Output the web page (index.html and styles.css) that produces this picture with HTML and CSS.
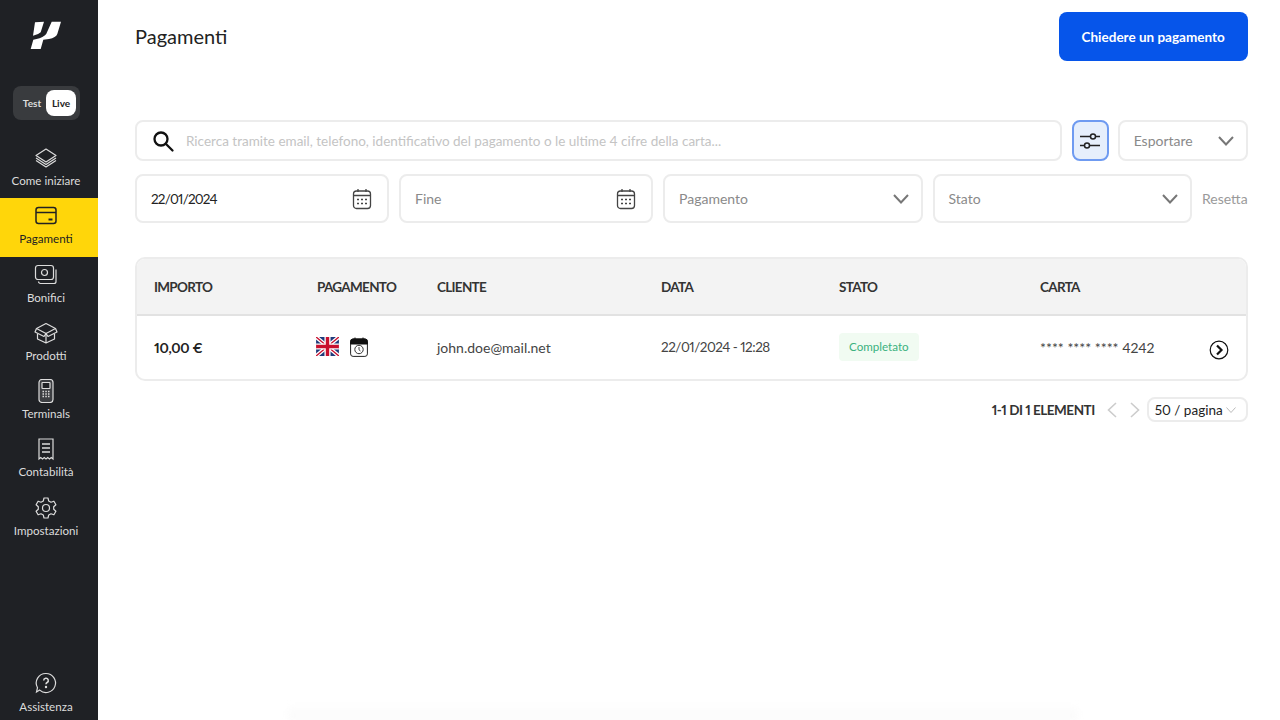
FILE: index.html
```html
<!DOCTYPE html>
<html lang="it">
<head>
  <meta charset="UTF-8">
  <meta name="viewport" content="width=device-width, initial-scale=1.0">
  <title>Pagamenti</title>
  <link rel="stylesheet" href="styles.css">
</head>
<body>
  <aside class="sidebar">
    <div class="logo">
      <svg width="32" height="30" viewBox="0 0 32 30"><path fill="#fff" d="M5 1.300 14 .7l-3.300 10.600Q8 14 3 14.700zM21.700.7H31L27.300 13Q26 16.500 19 18l-5.700.7L10.700 28H.7l2.600-9.300Q10 18 15 14.300q1.700-1.300 2-3z"/></svg>
    </div>
    <div class="mode-toggle">
      <span class="mode">Test</span>
      <span class="mode mode-on">Live</span>
    </div>
    <nav class="nav">
      <a class="nav-item">
        <svg width="24" height="24" viewBox="0 0 24 24" fill="none" stroke="currentColor" stroke-width="1.200" stroke-linejoin="round"><path d="M12 3 22 9.500 12 16 2 9.500z"/><path d="M2 12l10 6.500L22 12M2 14.500 12 21l10-6.500"/></svg>
        <span>Come iniziare</span>
      </a>
      <a class="nav-item active">
        <svg width="24" height="24" viewBox="0 0 24 24" fill="none" stroke="currentColor" stroke-width="1.500"><rect x="2" y="3.500" width="20" height="16" rx="2.500"/><path d="M2 8.500h20"/><path d="M14.500 15.500h4" stroke-width="2"/></svg>
        <span>Pagamenti</span>
      </a>
      <a class="nav-item">
        <svg width="24" height="24" viewBox="0 0 24 24" fill="none" stroke="currentColor" stroke-width="1.200"><rect x="1.500" y="2.500" width="18" height="14" rx="2.500"/><circle cx="10.500" cy="9.500" r="3"/><path d="M22 6.500v12a2 2 0 0 1-2 2H6.500a2 2 0 0 1-2-2"/></svg>
        <span>Bonifici</span>
      </a>
      <a class="nav-item">
        <svg width="24" height="24" viewBox="0 0 24 24" fill="none" stroke="currentColor" stroke-width="1.200" stroke-linejoin="round"><path d="M12 2.500 21.500 7.500 12 12.500 2.500 7.500z"/><path d="M2.500 7.500 1 11l9 4.500 2-3 2 3 9-4.500-1.500-3.500"/><path d="M3.500 13v5l8.500 4 8.500-4v-5M12 12.500V22"/></svg>
        <span>Prodotti</span>
      </a>
      <a class="nav-item">
        <svg width="24" height="24" viewBox="0 0 24 24" fill="none" stroke="currentColor" stroke-width="1.200"><rect x="5" y="0.500" width="14" height="23" rx="3" fill="#3c3e42"/><rect x="8" y="3.500" width="8" height="6" rx="0.500" fill="#1f2125"/><path d="M8.500 12.500h1.500M11.300 12.500h1.500M14 12.500h1.500M8.500 15h1.500M11.300 15h1.500M14 15h1.500M8.500 17.500h1.500M11.300 17.500h1.500M14 17.500h1.500" stroke-width="1.400"/></svg>
        <span>Terminals</span>
      </a>
      <a class="nav-item">
        <svg width="24" height="24" viewBox="0 0 24 24" fill="none" stroke="currentColor" stroke-width="1.200"><path d="M5 22V2h14v20l-1.750-1.500L15.500 22l-1.750-1.500L12 22l-1.750-1.500L8.500 22l-1.750-1.500z"/><path d="M8 7h8M8 11h8M8 15h8" stroke-width="1.500"/></svg>
        <span>Contabilità</span>
      </a>
      <a class="nav-item">
        <svg width="24" height="24" viewBox="0 0 24 24" fill="none" stroke="currentColor" stroke-width="1.200" stroke-linejoin="round"><circle cx="12" cy="12" r="3.500"/><path d="M10 2h4l.7 3 2.300 1.200 2.900-1 2 3.500-2.200 2.100v2.400l2.200 2.100-2 3.500-2.900-1-2.300 1.200-.7 3h-4l-.7-3L7 17.800l-2.900 1-2-3.500 2.200-2.100v-2.400L2.100 8.700l2-3.500 2.900 1 2.300-1.200z"/></svg>
        <span>Impostazioni</span>
      </a>
    </nav>
    <a class="nav-item help">
      <svg width="24" height="24" viewBox="0 0 24 24" fill="none" stroke="currentColor" stroke-width="1.200"><path d="M12 2.500a9.500 9.500 0 1 1-6.300 16.600L2.500 21l1-4.300A9.500 9.500 0 0 1 12 2.500z"/><path d="M9.700 9.500a2.300 2.300 0 1 1 3.400 2c-.8.500-1.100.9-1.100 1.800" stroke-width="1.500"/><circle cx="12" cy="16" r=".6" fill="currentColor"/></svg>
      <span>Assistenza</span>
    </a>
  </aside>

  <main class="content">
    <header class="top">
      <h1>Pagamenti</h1>
      <button class="btn-primary">Chiedere un pagamento</button>
    </header>

    <div class="filters">
      <div class="search-row">
        <div class="field search">
          <svg width="24" height="24" viewBox="0 0 24 24" fill="none" stroke="#111" stroke-width="2.300" stroke-linecap="round"><circle cx="10" cy="10" r="6.500"/><path d="M15 15l6.500 6.500"/></svg>
          <span class="placeholder light">Ricerca tramite email, telefono, identificativo del pagamento o le ultime 4 cifre della carta...</span>
        </div>
        <button class="filter-btn">
          <svg width="24" height="24" viewBox="0 0 24 24" fill="none" stroke="#222" stroke-width="1.500"><path d="M2 7.500h10.500M18 7.500h4M2 16.500h4M11.500 16.500H22"/><circle cx="15" cy="7.500" r="2.500"/><circle cx="9" cy="16.500" r="2.500"/></svg>
        </button>
        <div class="field export">
          <span class="placeholder">Esportare</span>
          <svg class="chev" width="16" height="10" viewBox="0 0 16 10" fill="none" stroke="#777" stroke-width="2"><path d="M1 1l7 7.500L15 1"/></svg>
        </div>
      </div>
      <div class="filter-row">
        <div class="field date">
          <span class="date-val">22/01/2024</span>
          <svg width="20" height="22" viewBox="0 0 20 22" fill="none" stroke="#444" stroke-width="1.300"><rect x="1.500" y="3" width="17" height="17.500" rx="3"/><path d="M1.500 7.500h17M6 1v3M14 1v3"/><path d="M5 11.500h2M9 11.500h2M13 11.500h2M5 15.500h2M9 15.500h2M13 15.500h2" stroke-width="1.700"/></svg>
        </div>
        <div class="field date">
          <span class="placeholder">Fine</span>
          <svg width="20" height="22" viewBox="0 0 20 22" fill="none" stroke="#444" stroke-width="1.300"><rect x="1.500" y="3" width="17" height="17.500" rx="3"/><path d="M1.500 7.500h17M6 1v3M14 1v3"/><path d="M5 11.500h2M9 11.500h2M13 11.500h2M5 15.500h2M9 15.500h2M13 15.500h2" stroke-width="1.700"/></svg>
        </div>
        <div class="field select">
          <span class="placeholder">Pagamento</span>
          <svg class="chev" width="16" height="10" viewBox="0 0 16 10" fill="none" stroke="#777" stroke-width="2"><path d="M1 1l7 7.500L15 1"/></svg>
        </div>
        <div class="field select">
          <span class="placeholder">Stato</span>
          <svg class="chev" width="16" height="10" viewBox="0 0 16 10" fill="none" stroke="#777" stroke-width="2"><path d="M1 1l7 7.500L15 1"/></svg>
        </div>
        <span class="reset">Resetta</span>
      </div>
    </div>

    <section class="table">
      <div class="t-row t-head">
        <span>IMPORTO</span>
        <span>PAGAMENTO</span>
        <span>CLIENTE</span>
        <span>DATA</span>
        <span>STATO</span>
        <span>CARTA</span>
      </div>
      <div class="t-row t-body">
        <span class="amount">10,00 €</span>
        <span class="pay-icons">
          <svg width="23" height="19" viewBox="0 0 60 50"><rect width="60" height="50" fill="#1f3a7a"/><path d="M0 0l60 50M60 0L0 50" stroke="#fff" stroke-width="10"/><path d="M0 0l60 50M60 0L0 50" stroke="#c8102e" stroke-width="3.500"/><path d="M30 0v50M0 25h60" stroke="#fff" stroke-width="16"/><path d="M30 0v50M0 25h60" stroke="#c8102e" stroke-width="9"/></svg>
          <svg width="18" height="20" viewBox="0 0 18 20"><rect x="0.600" y="2" width="16.800" height="17.400" rx="2.500" fill="#fff" stroke="#222"/><path d="M0.600 7V4.500A2.500 2.500 0 0 1 3 2h12a2.500 2.500 0 0 1 2.400 2.500V7z" fill="#111" stroke="#111"/><path d="M5 0.500v3M13 0.500v3" stroke="#111"/><circle cx="9" cy="12.500" r="4.200" fill="none" stroke="#333"/><path d="M9 10v2.800l1.500 1.200" fill="none" stroke="#333" stroke-width=".9"/></svg>
        </span>
        <span class="cell">john.doe@mail.net</span>
        <span class="cell row-date">22/01/2024 - 12:28</span>
        <span><span class="badge">Completato</span></span>
        <span class="card-cell">
          <span class="cell">**** **** **** 4242</span>
          <svg class="row-open" width="20" height="20" viewBox="0 0 20 20" fill="none" stroke="#111"><circle cx="10" cy="10" r="8.800" stroke-width="1.200"/><path d="M8 5.500l4.500 4.500L8 14.500" stroke-width="2.200"/></svg>
        </span>
      </div>
    </section>

    <div class="pager">
      <span class="pager-count">1-1 DI 1 ELEMENTI</span>
      <svg width="12" height="16" viewBox="0 0 12 16" fill="none" stroke="#ccc" stroke-width="1.600"><path d="M10 1L2.500 8l7.500 7"/></svg>
      <svg width="12" height="16" viewBox="0 0 12 16" fill="none" stroke="#ccc" stroke-width="1.600"><path d="M2 1l7.500 7L2 15"/></svg>
      <div class="page-size">
        <span>50 / pagina</span>
        <svg width="10" height="6" viewBox="0 0 10 6" fill="none" stroke="#bbb"><path d="M.5.500 5 5.500l4.500-5"/></svg>
      </div>
    </div>

    <div class="bottom-fade"></div>
  </main>
</body>
</html>
```

FILE: styles.css
```css
* {
  box-sizing: border-box;
}

body {
  margin: 0;
  height: 720px;
  overflow: hidden;
  display: flex;
  background-color: #fff;
  color: #222;
  font-family: Lato, "Open Sans", sans-serif;
  font-size: 14px;
  font-variant-numeric: proportional-nums;
}

.sidebar {
  width: 98px;
  flex-shrink: 0;
  height: 100%;
  display: flex;
  flex-direction: column;
  background-color: #1f2125;
  color: #dcdcdc;
}

.logo {
  height: 86px;
  padding: 21px 6px 0 0;
  display: flex;
  justify-content: center;
  align-items: flex-start;
}

.mode-toggle {
  width: 67px;
  height: 34px;
  margin-left: 13px;
  padding: 4px 4px 4px 5px;
  display: flex;
  align-items: center;
  background-color: #393b3e;
  border-radius: 8px;
}

.mode {
  flex: 1;
  text-align: center;
  font-size: 10px;
  font-weight: 700;
  color: #ddd;
}

.mode-on {
  flex: 0 0 30px;
  height: 26px;
  line-height: 26px;
  background-color: #fff;
  border-radius: 8px;
  color: #222;
}

.nav {
  margin-top: 20px;
  flex: 1;
}

.nav-item {
  height: 58.25px;
  padding: 6px 6px 0 0;
  display: flex;
  flex-direction: column;
  align-items: center;
  gap: 3px;
  font-size: 11.600px;
  line-height: 15px;
}

.nav-item.active {
  background-color: #ffd60a;
  color: #222;
}

.help {
  height: 59px;
  padding-top: 10px;
  gap: 3.500px;
}

.content {
  position: relative;
  flex: 1;
  padding: 12px 33px 0 37px;
}

.top {
  height: 49px;
  display: flex;
  justify-content: space-between;
  align-items: center;
}

h1 {
  margin: 0 0 2px;
  font-size: 20px;
  font-weight: 400;
  color: #222;
}

.btn-primary {
  width: 189px;
  height: 49px;
  border: none;
  border-radius: 8px;
  background-color: #0655ea;
  color: #fff;
  font-family: inherit;
  font-size: 13.500px;
  font-weight: 700;
}

.filters {
  margin-top: 59px;
}

.search-row {
  display: flex;
  gap: 10px;
  height: 41px;
}

.field {
  display: flex;
  align-items: center;
  justify-content: space-between;
  border: 2px solid #ececec;
  border-radius: 8px;
  padding: 0 12px 0 14px;
  background-color: #fff;
}

.search {
  flex: 1;
  justify-content: flex-start;
  gap: 11px;
  padding-left: 14px;
}

.placeholder {
  color: #8a8a8a;
}

.light {
  font-size: 13.500px;
  color: #c4c4c4;
}

.date-val {
  font-size: 13.500px;
  letter-spacing: -.8px;
}

.filter-btn {
  width: 37px;
  padding: 0;
  display: flex;
  align-items: center;
  justify-content: center;
  background-color: #e6effc;
  border: 2px solid #6f9bf1;
  border-radius: 8px;
}

.export {
  width: 130px;
  margin-left: -1px;
}

.filter-row {
  display: flex;
  align-items: stretch;
  gap: 10px;
  height: 49px;
  margin-top: 13px;
}

.date {
  width: 254px;
  padding-right: 15px;
}

.select {
  width: 259.500px;
}

.reset {
  align-self: center;
  color: #9a9a9a;
}

.table {
  margin-top: 34px;
  border: 2px solid #ececec;
  border-radius: 10px;
  overflow: hidden;
}

.t-row {
  display: grid;
  grid-template-columns: 163px 120px 224px 178px 201px 1fr;
  align-items: center;
  padding-left: 17px;
}

.t-head {
  height: 57px;
  background-color: #f3f3f3;
  border-bottom: 2px solid #e2e2e2;
  font-size: 13.500px;
  letter-spacing: -.7px;
  font-weight: 700;
  color: #333;
}

.t-body {
  height: 63px;
  padding-bottom: 1px;
}

.amount {
  font-weight: 700;
  letter-spacing: -.3px;
}

.pay-icons {
  display: flex;
  align-items: center;
  gap: 11px;
  margin: 0 0 1px -1px;
}

.cell {
  color: #444;
}

.row-date {
  font-size: 13.500px;
  letter-spacing: -.5px;
}

.badge {
  display: inline-block;
  padding: 6px 10px;
  background-color: #f1fbf2;
  border-radius: 4px;
  font-size: 11.600px;
  line-height: 16px;
  color: #3bb27f;
  margin-top: -1px;
}

.card-cell {
  display: flex;
  align-items: center;
  justify-content: space-between;
  padding-right: 17px;
}

.row-open {
  margin-top: 5px;
}

.pager {
  margin-top: 16px;
  display: flex;
  align-items: center;
  justify-content: flex-end;
  gap: 11px;
}

.pager-count {
  font-weight: 700;
  font-size: 13.500px;
  letter-spacing: -.5px;
  color: #333;
}

.page-size {
  width: 101px;
  height: 25px;
  margin-left: -5px;
  padding: 0 10px 0 6px;
  display: flex;
  align-items: center;
  justify-content: space-between;
  border: 2px solid #ececec;
  border-radius: 8px;
  font-size: 13.500px;
}

.bottom-fade {
  position: absolute;
  left: 190px;
  bottom: 0;
  width: 790px;
  height: 16px;
  background: linear-gradient(rgba(248, 248, 248, 0), #f9f9f9);
  filter: blur(3px);
}
```
